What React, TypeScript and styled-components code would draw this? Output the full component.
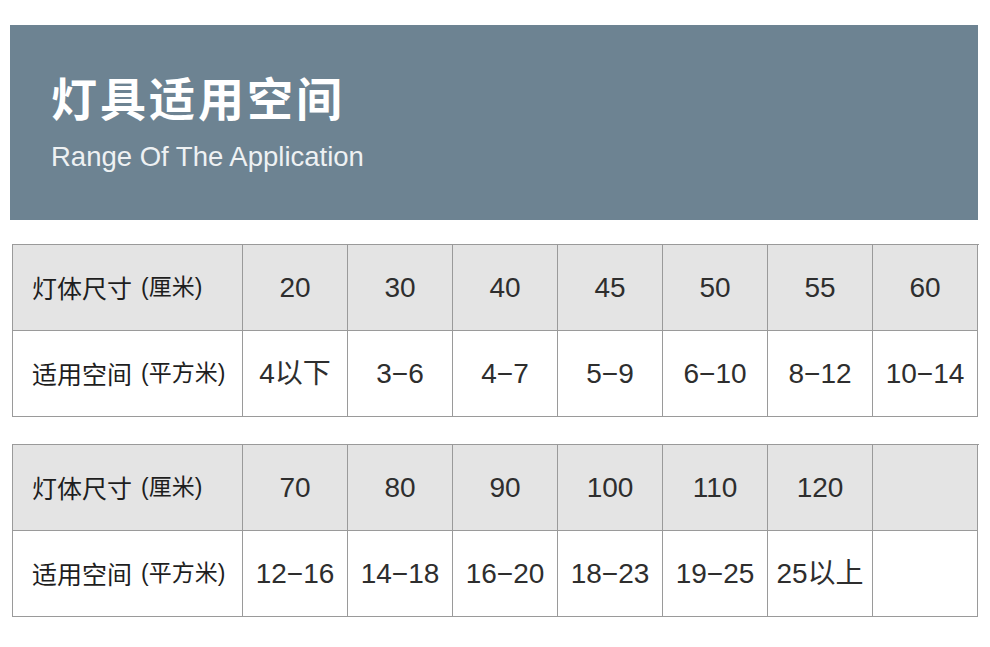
import React from 'react';
import styled, {createGlobalStyle} from 'styled-components';

const sizes1 = ['20', '30', '40', '45', '50', '55', '60'];
const areas1 = ['4以下', '3-6', '4-7', '5-9', '6-10', '8-12', '10-14'];
const sizes2 = ['70', '80', '90', '100', '110', '120', ''];
const areas2 = ['12-16', '14-18', '16-20', '18-23', '19-25', '25以上', ''];

export default function App() {
    return (
        <>
            <GlobalStyle />
            <Page>
                <Banner>
                    <Title>灯具适用空间</Title>
                    <Subtitle>Range Of The Application</Subtitle>
                </Banner>
                <SpecTable sizes={sizes1} areas={areas1} />
                <SpecTable sizes={sizes2} areas={areas2} />
            </Page>
        </>
    );
}

function SpecTable({sizes, areas}: {sizes: string[]; areas: string[]}) {
    return (
        <Table>
            <LabelCell head>灯体尺寸<Unit>(厘米)</Unit></LabelCell>
            {sizes.map((s, i) => <Cell head key={'s' + i}>{s}</Cell>)}
            <LabelCell>适用空间<Unit>(平方米)</Unit></LabelCell>
            {areas.map((a, i) => <Cell key={'a' + i}>{a.replace('-', '\u2212')}</Cell>)}
        </Table>
    );
}

const GlobalStyle = createGlobalStyle`
    html, body {
        margin: 0;
        padding: 0;
        background: #fff;
    }
    body {
        font-family: "Liberation Sans", "Noto Sans CJK SC", sans-serif;
        color: #2e2e2e;
    }
`
const Page = styled.div`
    width: 990px;
    height: 647px;
    display: flex;
    flex-direction: column;
    padding: 25px 12px 0 10px;
    box-sizing: border-box;
`
const Banner = styled.div`
    height: 195px;
    width: 968px;
    background-color: #6d8392;
    display: flex;
    flex-direction: column;
    padding: 48px 0 0 41px;
    box-sizing: border-box;
`
const Title = styled.div`
    font-family: "Noto Sans CJK SC", sans-serif;
    font-weight: 700;
    font-size: 46px;
    line-height: 46px;
    letter-spacing: 3px;
    color: #fff;
`
const Subtitle = styled.div`
    font-family: "Liberation Sans", "Noto Sans CJK SC", sans-serif;
    font-size: 27.5px;
    line-height: 30px;
    color: #eef1f3;
    margin-top: 23px;
`
const Table = styled.div`
    display: grid;
    grid-template-columns: 230px repeat(7, 105px);
    grid-template-rows: 86px 86px;
    margin: 24px 0 0 2px;
    width: 966px;
    border-top: 1px solid #9a9a9a;
    border-left: 1px solid #9a9a9a;
    & + & {
        margin-top: 27px;
    }
`
const Cell = styled.div<{head?: boolean}>`
    display: flex;
    align-items: center;
    justify-content: center;
    background: ${props => props.head ? '#e4e4e4' : '#fff'};
    border-right: 1px solid #9a9a9a;
    border-bottom: 1px solid #9a9a9a;
    font-size: 28px;
    line-height: 1;
    color: #2e2e2e;
    font-family: "Liberation Sans", "Noto Sans CJK SC", sans-serif;
    white-space: nowrap;
`
const LabelCell = styled(Cell)`
    justify-content: flex-start;
    padding-left: 19px;
    font-family: "Noto Sans CJK SC", sans-serif;
    font-weight: 400;
    font-size: 25px;
    color: #1e1e1e;
`
const Unit = styled.span`
    font-size: 23px;
    margin-left: 9px;
    font-weight: 400;
    font-family: "Liberation Sans", "Noto Sans CJK SC", sans-serif;
`
